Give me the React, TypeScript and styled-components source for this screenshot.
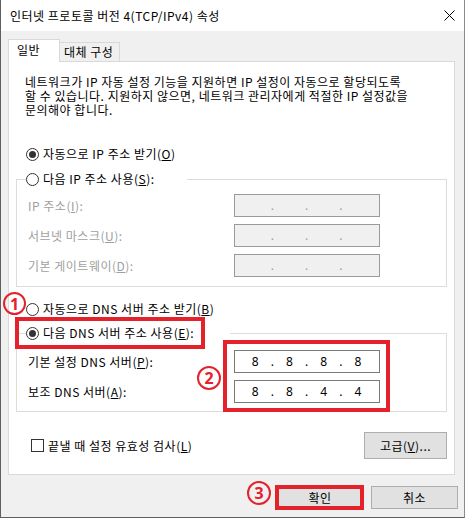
import React from 'react';
import styled, { createGlobalStyle } from 'styled-components';

const Global = createGlobalStyle`
  html, body { margin: 0; padding: 0; background: #f0f0f0; }
  body {
    font-family: "Noto Sans CJK KR", "Noto Sans", sans-serif;
    font-size: 12px;
    letter-spacing: 0.5px;
    color: #000;
  }
  * { box-sizing: border-box; }
`;

const RED = '#e3222b';

const Window = styled.div`
  position: relative;
  width: 465px;
  height: 518px;
  background: #f0f0f0;
  border-left: 1px solid #5f5f5f;
  border-right: 1px solid #8c8c8c;
  border-bottom: 1px solid #5f5f5f;
  display: flex;
  flex-direction: column;
  overflow: hidden;
`;

const TitleBar = styled.div`
  height: 31px;
  flex: none;
  background: #fff;
  display: flex;
  align-items: center;
  justify-content: space-between;
  padding: 0 9px 0 9px;
  line-height: 16px;
  white-space: nowrap;
`;

const Body = styled.div`
  flex: 1;
  display: flex;
  flex-direction: column;
  padding: 8px 9px 0 7px;
`;

const TabRow = styled.div`
  display: flex;
  align-items: flex-end;
  height: 23px;
  margin-bottom: -1px;
  position: relative;
  z-index: 1;
`;

const Tab = styled.div<{ $active?: boolean }>`
  height: ${p => (p.$active ? 23 : 19)}px;
  width: ${p => (p.$active ? 52 : 61)}px;
  margin-left: ${p => (p.$active ? 0 : -1)}px;
  margin-bottom: ${p => (p.$active ? 0 : 1)}px;
  background: ${p => (p.$active ? '#fff' : '#f0f0f0')};
  border: 1px solid #d9d9d9;
  border-bottom: none;
  display: flex;
  align-items: center;
  padding-left: ${p => (p.$active ? 8 : 4)}px;
  padding-bottom: ${p => (p.$active ? 2 : 0)}px;
  white-space: nowrap;
  line-height: 16px;
`;

const Panel = styled.div`
  height: 414px;
  flex: none;
  background: #fff;
  border: 1px solid #d9d9d9;
  padding: 0 7px;
  display: flex;
  flex-direction: column;
`;

const Desc = styled.p`
  margin: 13px 0 0 9px;
  line-height: 14px;
  white-space: nowrap;
`;

const Choice = styled.label<{ $mt?: number; $ml?: number }>`
  display: flex;
  align-items: center;
  gap: 4px;
  height: 16px;
  line-height: 16px;
  white-space: nowrap;
  margin-top: ${p => p.$mt ?? 0}px;
  margin-left: ${p => p.$ml ?? 0}px;
`;

const RadioMark = styled.span<{ $on?: boolean }>`
  position: relative;
  flex: none;
  width: 13px;
  height: 13px;
  border-radius: 50%;
  border: 1px solid #333;
  background: #fff;
  &::after {
    content: '';
    position: absolute;
    left: 2px;
    top: 2px;
    width: 7px;
    height: 7px;
    border-radius: 50%;
    background: #333;
    display: ${p => (p.$on ? 'block' : 'none')};
  }
`;

const CheckMark = styled.span`
  flex: none;
  width: 13px;
  height: 13px;
  border: 1px solid #333;
  background: #fff;
`;

const Group = styled.fieldset<{ $mt: number; $pt: number; $pb: number }>`
  margin: ${p => p.$mt}px 0 0;
  padding: ${p => p.$pt}px 0 ${p => p.$pb}px;
  border: 1px solid #dcdcdc;
  min-width: 0;
`;

const GroupLegend = styled.legend<{ $w: number }>`
  margin-left: 9px;
  padding: 0;
  width: ${p => p.$w}px;
  height: 16px;
`;

const Rows = styled.div`
  display: flex;
  flex-direction: column;
  gap: 7px;
`;

const FieldRow = styled.div<{ $disabled?: boolean }>`
  display: flex;
  align-items: center;
  justify-content: space-between;
  height: 23px;
  padding: 0 66px 0 11px;
  line-height: 16px;
  white-space: nowrap;
  color: ${p => (p.$disabled ? '#a0a0a0' : '#000')};
`;

const IpBox = styled.div<{ $disabled?: boolean }>`
  width: 146px;
  height: 23px;
  border: 1px solid ${p => (p.$disabled ? '#9a9a9a' : '#7a7a7a')};
  background: ${p => (p.$disabled ? '#f0f0f0' : '#fff')};
  display: grid;
  grid-template-columns: 1fr 0 1fr 0 1fr 0 1fr;
  align-items: center;
  padding: 0 4px 0 3px;
  font-family: "Noto Sans", "Noto Sans CJK KR", sans-serif;
  font-size: 12px;
  letter-spacing: 0;
  color: ${p => (p.$disabled ? '#a0a0a0' : '#000')};
`;

const Octet = styled.span`
  text-align: center;
  line-height: 16px;
`;

const Dot = styled.span`
  display: flex;
  justify-content: center;
  width: 0;
  overflow: visible;
  line-height: 16px;
`;

const CheckRow = styled.div`
  display: flex;
  align-items: center;
  justify-content: space-between;
  margin-top: 20px;
  padding-left: 15px;
`;

const Button = styled.div<{ $w: number; $h: number }>`
  width: ${p => p.$w}px;
  height: ${p => p.$h}px;
  background: #e1e1e1;
  border: 1px solid #adadad;
  display: flex;
  align-items: center;
  justify-content: center;
  line-height: 16px;
  white-space: nowrap;
`;

const ButtonRow = styled.div`
  display: flex;
  justify-content: flex-end;
  gap: 8px;
  margin-top: 11px;
  margin-right: -3px;
`;

const RedBox = styled.div`
  position: absolute;
  border: 4px solid ${RED};
  pointer-events: none;
`;

const Circled = styled.span`
  position: absolute;
  border: 2.5px solid ${RED};
  border-radius: 50%;
  color: ${RED};
  font-family: "Noto Sans", "Liberation Sans", sans-serif;
  font-weight: 700;
  font-size: 16px;
  letter-spacing: 0;
  line-height: 1;
  display: flex;
  align-items: center;
  justify-content: center;
`;

const CloseIcon = () => (
  <svg width="11" height="11" viewBox="0 0 11 11">
    <path d="M0.5 0.5 L10.5 10.5 M10.5 0.5 L0.5 10.5" stroke="#000" strokeWidth="1" fill="none" />
  </svg>
);

const Ip: React.FC<{ values?: string[]; disabled?: boolean }> = ({ values = ['', '', '', ''], disabled }) => (
  <IpBox $disabled={disabled}>
    <Octet>{values[0]}</Octet>
    <Dot>.</Dot>
    <Octet>{values[1]}</Octet>
    <Dot>.</Dot>
    <Octet>{values[2]}</Octet>
    <Dot>.</Dot>
    <Octet>{values[3]}</Octet>
  </IpBox>
);

export default function App() {
  return (
    <>
      <Global />
      <Window>
        <TitleBar>
          <span>인터넷 프로토콜 버전 4(TCP/IPv4) 속성</span>
          <CloseIcon />
        </TitleBar>
        <Body>
          <TabRow>
            <Tab $active>일반</Tab>
            <Tab>대체 구성</Tab>
          </TabRow>
          <Panel>
            <Desc>
              네트워크가 IP 자동 설정 기능을 지원하면 IP 설정이 자동으로 할당되도록
              <br />
              할 수 있습니다. 지원하지 않으면, 네트워크 관리자에게 적절한 IP 설정값을
              <br />
              문의해야 합니다.
            </Desc>
            <Choice $mt={29} $ml={10}>
              <RadioMark $on />
              <span>
                자동으로 IP 주소 받기(<u>O</u>)
              </span>
            </Choice>
            <Group $mt={9} $pt={7} $pb={9}>
              <GroupLegend $w={161}>
                <Choice>
                  <RadioMark />
                  <span>
                    다음 IP 주소 사용(<u>S</u>):
                  </span>
                </Choice>
              </GroupLegend>
              <Rows>
                <FieldRow $disabled>
                  <span>
                    IP 주소(<u>I</u>):
                  </span>
                  <Ip disabled />
                </FieldRow>
                <FieldRow $disabled>
                  <span>
                    서브넷 마스크(<u>U</u>):
                  </span>
                  <Ip disabled />
                </FieldRow>
                <FieldRow $disabled>
                  <span>
                    기본 게이트웨이(<u>D</u>):
                  </span>
                  <Ip disabled />
                </FieldRow>
              </Rows>
            </Group>
            <Choice $mt={14} $ml={10}>
              <RadioMark />
              <span>
                자동으로 DNS 서버 주소 받기(<u>B</u>)
              </span>
            </Choice>
            <Group $mt={8} $pt={9} $pb={8}>
              <GroupLegend $w={204}>
                <Choice>
                  <RadioMark $on />
                  <span>
                    다음 DNS 서버 주소 사용(<u>E</u>):
                  </span>
                </Choice>
              </GroupLegend>
              <Rows>
                <FieldRow>
                  <span>
                    기본 설정 DNS 서버(<u>P</u>):
                  </span>
                  <Ip values={['8', '8', '8', '8']} />
                </FieldRow>
                <FieldRow>
                  <span>
                    보조 DNS 서버(<u>A</u>):
                  </span>
                  <Ip values={['8', '8', '4', '4']} />
                </FieldRow>
              </Rows>
            </Group>
            <CheckRow>
              <Choice>
                <CheckMark />
                <span>
                  끝낼 때 설정 유효성 검사(<u>L</u>)
                </span>
              </Choice>
              <Button $w={83} $h={27}>
                고급(<u>V</u>)...
              </Button>
            </CheckRow>
          </Panel>
          <ButtonRow>
            <Button $w={86} $h={23}>확인</Button>
            <Button $w={87} $h={23}>취소</Button>
          </ButtonRow>
        </Body>

        <RedBox style={{ left: 14, top: 317, width: 190, height: 32 }} />
        <RedBox style={{ left: 222, top: 340, width: 167, height: 72 }} />
        <RedBox style={{ left: 274, top: 485, width: 89, height: 25 }} />
        <Circled style={{ left: 2, top: 292, width: 23, height: 23 }}>1</Circled>
        <Circled style={{ left: 196, top: 366, width: 24, height: 24 }}>2</Circled>
        <Circled style={{ left: 246, top: 481, width: 24, height: 24 }}>3</Circled>
      </Window>
    </>
  );
}
